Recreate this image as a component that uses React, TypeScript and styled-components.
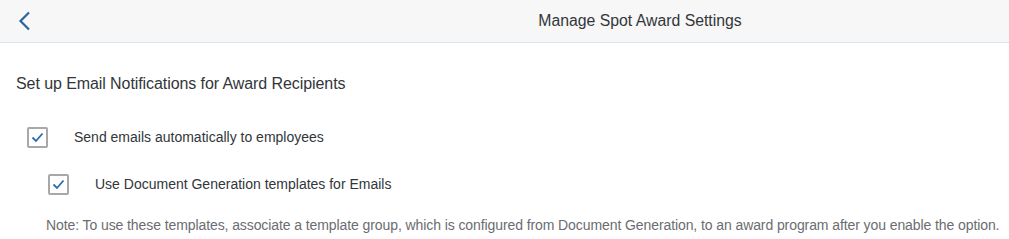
import React from 'react';
import styled, { createGlobalStyle } from 'styled-components';

const GlobalStyle = createGlobalStyle`
  html, body {
    margin: 0;
    padding: 0;
    background: #ffffff;
  }
  body {
    font-family: "Liberation Sans", Arial, sans-serif;
    color: #32363a;
  }
`;

const Header = styled.header`
  display: flex;
  align-items: center;
  height: 42px;
  background-color: #f7f7f7;
  border-bottom: 1px solid #d9e5f0;
  padding-left: 16px;
`;

const BackButton = styled.button`
  display: flex;
  align-items: center;
  justify-content: center;
  width: 16px;
  height: 24px;
  padding: 0;
  border: none;
  background: transparent;
  cursor: pointer;
`;

const Title = styled.h1`
  flex: 1;
  margin: 0;
  padding-left: 239px;
  text-align: center;
  font-size: 15.8px;
  font-weight: normal;
  color: #32363a;
`;

const Content = styled.main`
  display: flex;
  flex-direction: column;
  padding: 31px 0 0 16px;
`;

const SectionTitle = styled.h2`
  margin: 0 0 32px;
  font-size: 16px;
  font-weight: normal;
  line-height: 20px;
  letter-spacing: -0.08px;
  color: #32363a;
`;

const OptionRow = styled.label<{ indent: number }>`
  display: flex;
  align-items: center;
  gap: 26px;
  margin-left: ${({ indent }) => indent}px;
  height: 22px;
  font-size: 14px;
  color: #32363a;
`;

const Box = styled.span`
  display: flex;
  align-items: center;
  justify-content: center;
  box-sizing: border-box;
  width: 21px;
  height: 21px;
  border: 2px solid #a8a8a8;
  border-radius: 2px;
  background: #ffffff;
`;

const Options = styled.div`
  display: flex;
  flex-direction: column;
  gap: 25px;
`;

const Note = styled.p`
  margin: 21px 0 0 30px;
  font-size: 14px;
  line-height: 18px;
  letter-spacing: -0.09px;
  color: #6a6d70;
  white-space: nowrap;
`;

const Check: React.FC = () => (
  <svg width="13" height="11" viewBox="0 0 13 11">
    <path d="M1.5 5.5 L5 9 L11.5 1.5" fill="none" stroke="#2b6cb0" strokeWidth="1.8" />
  </svg>
);

interface OptionProps {
  indent: number;
  label: string;
}

const Option: React.FC<OptionProps> = ({ indent, label }) => (
  <OptionRow indent={indent}>
    <Box>
      <Check />
    </Box>
    <span>{label}</span>
  </OptionRow>
);

const App: React.FC = () => {
  return (
    <>
      <GlobalStyle />
      <Header>
        <BackButton aria-label="Back">
          <svg width="14" height="20" viewBox="0 0 14 20">
            <path d="M12 1.5 L3.5 10 L12 18.5" fill="none" stroke="#2d64a0" strokeWidth="2.2" />
          </svg>
        </BackButton>
        <Title>Manage Spot Award Settings</Title>
      </Header>
      <Content>
        <SectionTitle>Set up Email Notifications for Award Recipients</SectionTitle>
        <Options>
          <Option indent={11} label="Send emails automatically to employees" />
          <Option indent={32} label="Use Document Generation templates for Emails" />
        </Options>
        <Note>
          Note: To use these templates, associate a template group, which is configured from Document Generation, to an award program after you enable the option.
        </Note>
      </Content>
    </>
  );
};

export default App;
